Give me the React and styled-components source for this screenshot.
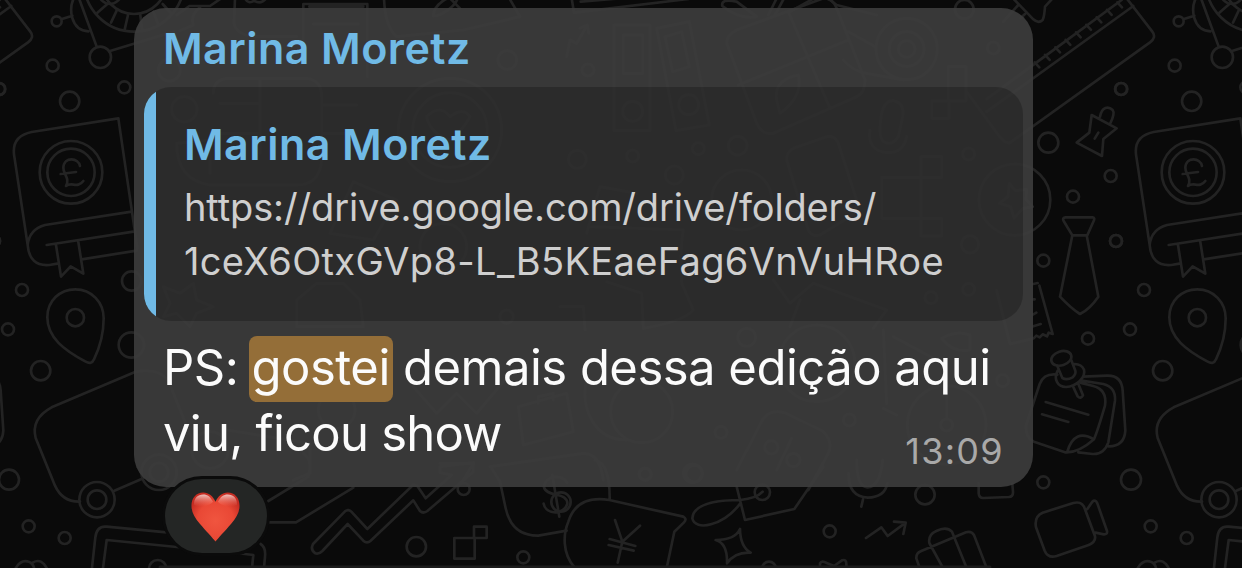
import React from "react";
import styled, { createGlobalStyle } from "styled-components";

const GlobalStyle = createGlobalStyle`
  * {
    box-sizing: border-box;
  }
  body {
    margin: 0;
    background: #0a0a0a;
    overflow: hidden;
  }
`;

const Chat = styled.main`
  position: relative;
  display: flex;
  flex-direction: column;
  align-items: flex-start;
  width: 1242px;
  height: 568px;
  padding: 8px 0 0 134px;
  overflow: hidden;
  background: #0a0a0a;
  font-family: Inter, "Liberation Sans", sans-serif;
`;

const WallpaperSvg = styled.svg`
  position: absolute;
  inset: 0;
  width: 1242px;
  height: 568px;
  fill: none;
  stroke: #232323;
  stroke-width: 8;
  stroke-linecap: round;
  stroke-linejoin: round;
`;

const Bubble = styled.article`
  position: relative;
  flex: none;
  display: flex;
  flex-direction: column;
  width: 899px;
  height: 479px;
  padding: 14px 10px 0;
  border-radius: 32px;
  background: rgba(60, 60, 60, 0.93);
`;

const Name = styled.div`
  color: #70bae6;
  font-size: 43px;
  font-weight: 560;
  line-height: 52px;
  letter-spacing: 0.45px;
  white-space: nowrap;
`;

const Sender = styled(Name)`
  height: 65px;
  padding-left: 19px;
`;

const Quote = styled.blockquote`
  flex: none;
  display: flex;
  width: 879px;
  height: 234px;
  margin: 0;
  border-radius: 27px;
  overflow: hidden;
  background: rgba(0, 0, 0, 0.215);
`;

const QuoteBar = styled.div`
  flex: none;
  width: 12px;
  background: #70bae6;
`;

const QuoteBody = styled.div`
  padding: 31px 0 0 28px;
`;

const Link = styled.div`
  margin-top: 10px;
  color: #cfcfcf;
  font-size: 38px;
  line-height: 54px;
  white-space: nowrap;
`;

const LinkLine = styled.div`
  letter-spacing: ${({ $spacing }) => $spacing};
`;

const Content = styled.div`
  display: grid;
  padding: 14px 19px 0;
`;

const Message = styled.p`
  grid-area: 1 / 1;
  margin: 0;
  color: #fbfbfb;
  font-size: 49px;
  line-height: 66px;
  white-space: nowrap;
`;

const MessageLine = styled.span`
  display: block;
  letter-spacing: ${({ $spacing }) => $spacing};
`;

const Highlight = styled.mark`
  margin: 0 -3px;
  padding: 2px 3px 5px;
  border-radius: 8px;
  background: #946e38;
  color: inherit;
`;

const Time = styled.time`
  grid-area: 1 / 1;
  align-self: end;
  justify-self: end;
  margin: 0 0 -1px;
  color: #a9a9a9;
  font-size: 36px;
  line-height: 34px;
  letter-spacing: 1.3px;
`;

const Reaction = styled.div`
  position: relative;
  flex: none;
  display: flex;
  align-items: center;
  justify-content: center;
  width: 108px;
  height: 80px;
  margin: -11px 0 0 28px;
  padding: 1px 2px 0 0;
  border: 3px solid #0b0b0b;
  border-radius: 40px;
  background: #242625;
`;

const Heart = styled.svg`
  display: block;
  width: 51px;
  height: 51px;
`;

const rulerTicks = [0, 1, 2, 3, 4, 5, 6, 7, 8];

// One column of the doodle pattern, it repeats every 1122px
const Doodles = () => (
  <g transform="scale(0.33333)">
    {/* lunar rover */}
    <circle cx="170" cy="64" r="15" />
    <path d="M186 57L217 47M225-12C203 25 212 90 265 94M237-5L290 140M330 153L520 95" />
    <circle cx="301" cy="172" r="32" />
    <circle cx="402" cy="-55" r="150" />
    <circle cx="402" cy="-55" r="97" />
    <circle cx="330" cy="-22" r="34" />
    <path d="M292 38L322 12M333 68L350 32M374 89L384 45M426 89L421 45M475 74L460 35M515 42L488 12" />
    <circle cx="158" cy="197" r="18" />
    <circle cx="373" cy="262" r="18" />
    <circle cx="209" cy="304" r="29" />
    <circle cx="-2" cy="267" r="18" />

    {/* book */}
    <path d="M355 355L95 396Q36 408 42 463L85 748M355 355L412 745M395 635L135 675Q88 688 83 735Q88 800 148 795L172 791M140 735L405 694M245 778L410 752M168 735L183 830L212 799L250 821L235 726" />
    <circle cx="213" cy="517" r="94" />
    <circle cx="213" cy="517" r="71" />
    <path d="M240 498C237 474 192 467 190 503C189 523 211 534 198 558C215 544 232 567 250 543M182 522L228 516" />
    <circle cx="-18" cy="723" r="18" />
    <circle cx="395" cy="843" r="29" />

    <g transform="translate(0 852)">
      <circle cx="66" cy="18" r="18" />
      <circle cx="24" cy="136" r="18" />
      <circle cx="122" cy="260" r="29" />
      <circle cx="27" cy="587" r="30" />
      <circle cx="86" cy="727" r="18" />
      <circle cx="194" cy="762" r="18" />
      <circle cx="394" cy="183" r="38" />
      <path d="M282 226Q275 243 257 233C193 199 142 161 142 100C142 50 180 16 226 16C275 16 311 55 311 103C311 150 299 191 282 226Z" />
      <circle cx="226" cy="101" r="26" />
      <path d="M405 264L155 370Q92 404 107 462L165 605Q188 655 240 653M343 620L430 583M405 264Q475 250 505 290L590 500" />
      <circle cx="291" cy="647" r="53" />
      <circle cx="291" cy="647" r="28" />
      <circle cx="477" cy="565" r="53" />
      <circle cx="477" cy="565" r="28" />
      <path d="M275 860L286 760Q290 725 320 728L500 745M308 860L320 768L560 792M45 856Q60 828 82 832Q99 835 103 855M98 836Q125 820 142 856" />
      <circle cx="473" cy="854" r="26" />
    </g>

    <g transform="translate(-366 0)">
      {/* ruler */}
      <path d="M-40 335L400 18M-40 297L365 0M380-5L457 95Q470 112 450 127L30 428Q15 432 -5 405L-100 275" />
      {rulerTicks.map((i) => (
        <path key={i} d={`M${104 + i * 31} ${187 - i * 22.5}l14 15`} />
      ))}
      <path d="M40-4L100 58Q115 72 128 60Q133 50 135 20L155-2M55 15L10 65M75 42L62 54" />

      {/* push pin */}
      <path d="M275 345L350 385L310 417L306 468L230 428L268 398ZM300 350C306 320 325 318 338 330Q346 340 330 372M295 398L284 416" />
      <circle cx="363" cy="267" r="18" />
      <circle cx="145" cy="428" r="30" />
      <circle cx="332" cy="528" r="18" />
      <circle cx="219" cy="590" r="18" />
      <circle cx="348" cy="723" r="18" />
      <circle cx="130" cy="782" r="18" />
      <circle cx="44" cy="599" r="107" />
      <path d="M28 550l18 22 34-4-2 30 20 22-30 6-26 28-10-34-34-10 26-20z" />

      {/* tie */}
      <path d="M197 652H277Q286 653 281 663L262 706H217L191 663Q186 653 197 652M217 706L180 890Q215 927 240 942Q270 927 295 890L260 706" />

      <g transform="translate(0 852)">
        <path d="M118 5L158 150L146 146L141 157L128 151L119 160L109 155L101 163M100 0L113-3M100 46h4M100 91L109 86M100 127L122 120M100 163L30 180L-10 20" />
        <circle cx="264" cy="164" r="18" />
        <circle cx="130" cy="595" r="18" />
        {/* sticky notes */}
        <path d="M172 272C140 268 127 280 119 300L78 425Q76 462 102 473L195 505Q235 508 282 466Q293 440 315 365Q322 317 280 306L240 296M202 503Q223 432 282 466M250 278L320 275Q365 273 368 320L376 440Q373 488 325 487M245 290L310 300Q348 310 345 350L325 475Q312 512 278 510L235 505M137 354L265 392M126 391L205 414" />
        <ellipse cx="184" cy="223" rx="31" ry="21" transform="rotate(-18 184 223)" />
        <path d="M172 246L187 282Q200 290 218 280Q229 270 226 260L214 229M173 260C160 285 172 309 198 309C230 307 258 280 252 257Q245 241 224 240M219 307L233 337Q242 346 249 334L236 302" />
        {/* camcorder */}
        <path d="M128 686L220 657Q248 650 255 676L285 757Q288 773 266 783L170 816Q144 824 134 800L108 730Q102 697 128 686M262 675L277 653Q286 645 292 658L321 741Q323 752 311 751L287 746" />
      </g>
    </g>
  </g>
);

const Wallpaper = () => (
  <WallpaperSvg viewBox="0 0 1242 568" aria-hidden="true">
    <Doodles />
    <g transform="translate(1122 0)">
      <Doodles />
    </g>

    {/* top row */}
    <g transform="translate(130 0) scale(0.33333)">
      <path d="M140 45L178 18H240L275-6M210 22Q180 45 190 75L150 92M315-5L312 70Q320 108 380 110H500M345-5Q355 14 372 2Q392 14 408-4M520 150V12H712V230M538 20H700M550 72H685M762-5Q765 80 800 110L1000 90L1170 50L1138-5M910 48C910 15 960-20 983-5C975 22 930 48 910 48M960-5L990 25" />
      <circle cx="1132" cy="180" r="28" />
      <circle cx="118" cy="210" r="33" />
      <circle cx="163" cy="328" r="38" />
      <path d="M250 280Q250 235 300 235H530Q575 240 575 290V480Q570 555 500 555H240Q140 540 140 430L240 420V520M390 240V460M270 310H390M270 400H390M580 315H680M580 400H660" />
      <circle cx="960" cy="390" r="155" />
      <circle cx="960" cy="390" r="112" />
      <path d="M890 350Q930 310 960 350Q1000 320 1020 350Q1000 390 960 420Q900 400 890 350M600 700L670 545L800 600L730 720ZM100 860L150 880L190 850L200 900L250 920L200 940L180 980L140 940L100 950L120 910ZM500 900L560 850L640 850L690 900L700 980L500 980Z" />
      <circle cx="940" cy="740" r="70" />
      <circle cx="1130" cy="950" r="20" />
    </g>
    <g transform="translate(560 0) scale(0.33333)">
      <path d="M35-5L42 38L385-3M62 5L180-5M487 18Q482-5 530 5L590 50Q540 60 487 18M625 45L650-5M645 45L672-5M690 35L760-4H805L830 15L950 45" />
      <circle cx="1213" cy="28" r="28" />
      <path d="M20 170L30 120L50 130L82 75M60 85L82 75L86 100M162 75H270V392H162ZM190 105H248V220H190ZM290 85L388 65L448 375L348 392ZM315 110L365 95L388 200L338 215ZM500 130Q500 105 530 90L790-5Q820-5 830 25L915 240Q915 280 890 290L640 400Q605 405 590 370ZM685 35L810 325M535 255L865 120M650 300Q640 240 715 225Q730 290 660 340Z" />
      <circle cx="84" cy="210" r="18" />
      <circle cx="218" cy="334" r="30" />
      <circle cx="386" cy="314" r="30" />
      <circle cx="1040" cy="147" r="92" />
      <circle cx="1040" cy="147" r="52" />
      <circle cx="1040" cy="147" r="25" />
      <circle cx="1300" cy="144" r="18" />
      <path d="M865 95L945 140M850 180Q880 215 920 220L1030 240M965 340Q975 300 1000 302Q1035 310 1028 350L1015 410Q995 440 970 425Q953 410 965 340M930 390Q920 450 980 458Q1030 460 1040 410M1165 200H1218V303H1165ZM1115 303H1167V355H1115ZM965 533H1145V470H1083V708H1145V655H965ZM680 480Q680 455 700 445L800 410Q825 405 835 430L890 600Q890 640 870 650L780 705Q755 712 745 690Z" />
      <circle cx="545" cy="600" r="90" />
      <circle cx="533" cy="437" r="28" />
      <circle cx="415" cy="446" r="18" />
      <circle cx="218" cy="468" r="18" />
      <circle cx="343" cy="525" r="27" />
      <circle cx="52" cy="478" r="27" />
      <circle cx="1226" cy="462" r="18" />
      <circle cx="1230" cy="733" r="26" />
      <circle cx="1226" cy="868" r="18" />
      <circle cx="1113" cy="893" r="18" />
      <path d="M80 700L120 560L230 580M90 680L370 690Q360 740 365 850L400 930Q370 965 250 985L245 880L140 845M640 840L690 910L760 850L980 930L940 985M690 980L720 900M0 920H70L75 990" />
    </g>

    {/* behind the message text */}
    <g transform="translate(150 330) scale(0.33333)">
      <path d="M790 170L860 250L920 190L980 250L1090 120M1105 230L1250 190L1270 305L1120 345ZM1165 220V200L1210 190V210M1020 410L1300 370Q1350 370 1360 450M1310 150C1290 230 1330 330 1430 330M870 400H970L940 450M230 300L480 340V430L430 450" />
      <circle cx="560" cy="240" r="55" />
      <circle cx="180" cy="360" r="55" />
    </g>
    <g transform="translate(620 330) scale(0.33333)">
      <circle cx="65" cy="245" r="93" />
      <circle cx="590" cy="100" r="115" />
      <circle cx="980" cy="285" r="118" />
      <circle cx="980" cy="285" r="18" />
      <circle cx="380" cy="22" r="27" />
      <circle cx="303" cy="307" r="18" />
      <circle cx="688" cy="270" r="18" />
      <circle cx="218" cy="430" r="28" />
      <circle cx="75" cy="432" r="18" />
      <circle cx="1148" cy="152" r="18" />
      <circle cx="454" cy="352" r="20" />
      <circle cx="520" cy="390" r="20" />
      <path d="M350 420L430 265Q455 235 500 250L610 305Q640 335 625 370L565 480M470 420L515 325M790 0L800 220M790 235L830 255M820 20L950 90M965 25Q1010 0 1050 15V60Q1000 70 965 25M980 265V190" />
    </g>

    {/* bottom row */}
    <g transform="translate(130 460) scale(0.33333)">
      <path d="M415 123L535 50Q550 0 520-20M415 187H498L670 83M392 252Q408 262 405 290L402 324M320 279L370 285L366 324M549 252Q540 270 556 280Q566 284 577 273L653 192L700 242Q711 252 722 242L850 121L870 153Q880 162 892 153L1030 35V8L930 20V38L965 45L887 115L862 78L850 74L712 207L664 155Q655 146 645 154Z" />
      <circle cx="859" cy="260" r="29" />
      <circle cx="1180" cy="292" r="18" />
      <circle cx="1001" cy="87" r="18" />
      <path d="M973 234H1034V296H973ZM1032 200H1070V234H1032ZM1085 25L1110 65L1127 145Q1145 228 1225 227L1310 212M1311 68C1300 42 1244 45 1242 82C1250 112 1314 95 1312 132C1302 165 1248 166 1241 131M1267 45L1288 170" />
      <circle cx="1293" cy="126" r="29" />
    </g>
    <g transform="translate(560 460) scale(0.33333)">
      <path d="M105 0Q150 10 149 118M45 324C5 280 10 220 25 185Q50 105 148 120L370 170Q382 177 372 187L343 215L320 324M165 180L187 245L240 197M187 245L173 308M149 237L226 258M146 255L221 272M530 80L555 180L703 147L790 20M541 120C470 120 400 130 397 175C405 215 490 198 541 130M541 120Q590 115 608 95M540 207Q541 261 572 278Q525 275 501 310Q503 250 467 240Q525 240 540 207M866 40Q864 110 923 113Q975 112 982 70M890 0Q890 80 922 82Q960 82 968 0M909 118L904 140M918 234L964 202L983 228L1034 190M1002 185L1037 188L1030 222M1256 70V100Q1257 114 1270 114L1346 111Q1360 110 1359 95L1357 72M1079 324L1069 295Q1068 280 1082 274L1218 217Q1234 212 1242 225L1280 324M1149 324L1108 249Q1104 224 1129 213Q1159 198 1176 215L1220 324M780 324V310Q785 300 800 309L822 318L846 301Q860 296 859 315V324" />
      <circle cx="607" cy="97" r="23" />
      <circle cx="809" cy="214" r="18" />
      <circle cx="1095" cy="104" r="29" />
      <circle cx="627" cy="326" r="21" />
      <circle cx="256" cy="43" r="18" />
      <circle cx="403" cy="41" r="25" />
    </g>

    {/* upper edge of the next message */}
    <path d="M160 567H990" stroke="#1c1c1c" strokeWidth="3" />
  </WallpaperSvg>
);

const HeartIcon = () => (
  <Heart viewBox="0 0 52 52" role="img" aria-label="❤️">
    <defs>
      <radialGradient id="heart" cx="0.5" cy="0.58" r="0.58">
        <stop offset="0" stopColor="#f0553f" />
        <stop offset="0.65" stopColor="#e94835" />
        <stop offset="1" stopColor="#c52c22" />
      </radialGradient>
      <linearGradient id="shine" x1="0" y1="0" x2="0" y2="1">
        <stop offset="0" stopColor="#fff" stopOpacity="0.72" />
        <stop offset="1" stopColor="#ff8d7b" stopOpacity="0" />
      </linearGradient>
    </defs>
    <path
      fill="url(#heart)"
      d="M26 51.5C23 48 16 40.5 10 33.500C4.500 27 1.500 21.500 1.500 15C1.500 7 6.500 1.500 13.500 1.500C19 1.500 23.500 5 26 11C28.500 5 33 1.500 38.500 1.500C45.500 1.500 50.500 7 50.500 15C50.500 21.500 47.500 27 42 33.500C36 40.500 29 48 26 51.500Z"
    />
    <path
      fill="url(#shine)"
      d="M4 14C4 7 8 3.500 13.500 3.500C18 3.500 21 6 23.500 11C20 16 8 17 4 14ZM48 14C48 7 44 3.500 38.500 3.500C34 3.500 31 6 28.500 11C32 16 44 17 48 14Z"
    />
  </Heart>
);

const App = () => {
  return (
    <>
      <GlobalStyle />
      <Chat>
        <Wallpaper />
        <Bubble>
          <Sender>Marina Moretz</Sender>
          <Quote>
            <QuoteBar />
            <QuoteBody>
              <Name>Marina Moretz</Name>
              <Link>
                <LinkLine $spacing="-0.13px">
                  https://drive.google.com/drive/folders/
                </LinkLine>
                <LinkLine $spacing="0.34px">
                  1ceX6OtxGVp8-L_B5KEaeFag6VnVuHRoe
                </LinkLine>
              </Link>
            </QuoteBody>
          </Quote>
          <Content>
            <Message>
              <MessageLine $spacing="-0.52px">
                PS: <Highlight>gostei</Highlight> demais dessa edição aqui
              </MessageLine>
              <MessageLine $spacing="-0.75px">viu, ficou show</MessageLine>
            </Message>
            <Time>13:09</Time>
          </Content>
        </Bubble>
        <Reaction>
          <HeartIcon />
        </Reaction>
      </Chat>
    </>
  );
};

export default App;
